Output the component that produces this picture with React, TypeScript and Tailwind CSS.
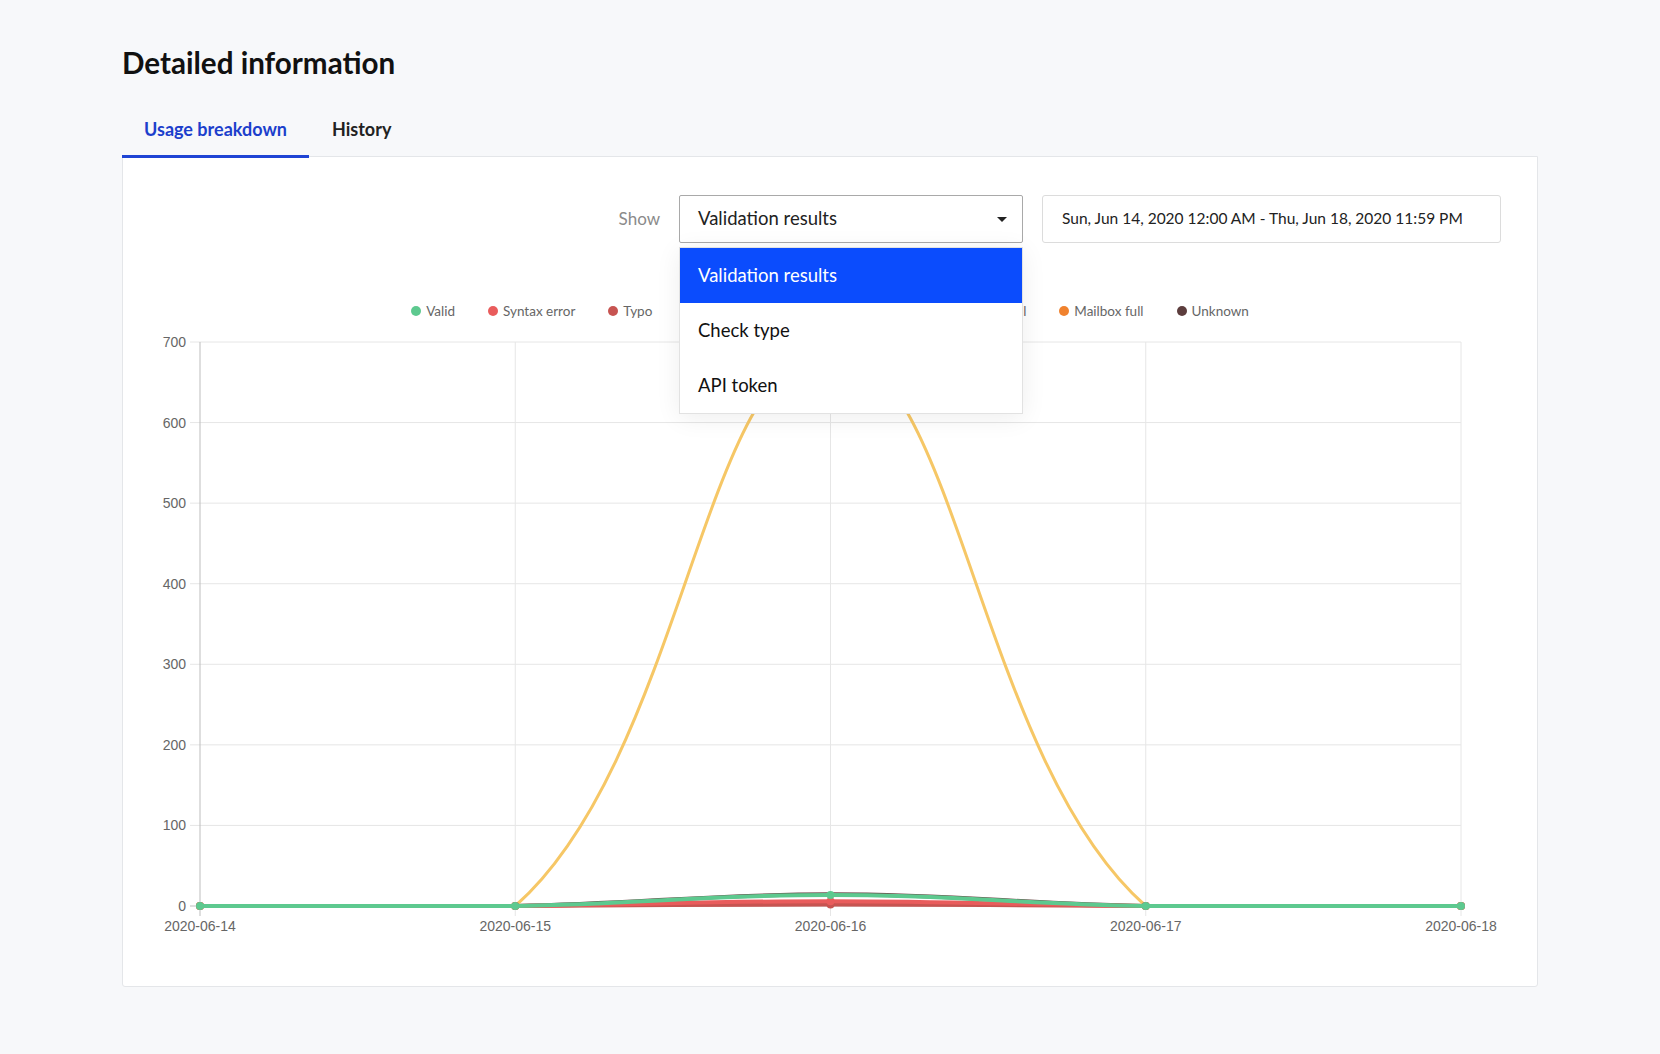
import React from "react";

type Pt = { x: number; y: number };

// chart area, in page pixels
const LEFT = 200;
const RIGHT = 1461;
const TOP = 342;
const BOTTOM = 906;
const STEP = (RIGHT - LEFT) / 4;
const PER = (BOTTOM - TOP) / 700;

const dates = ["2020-06-14", "2020-06-15", "2020-06-16", "2020-06-17", "2020-06-18"];
const ticks = [0, 100, 200, 300, 400, 500, 600, 700];

const legend = [
  { name: "Valid", color: "#5dc98f" },
  { name: "Syntax error", color: "#e95c5c" },
  { name: "Typo", color: "#c75451" },
  { name: "Disposable", color: "#f6c766" },
  { name: "Role", color: "#7c8ce8" },
  { name: "Invalid", color: "#9b59b6" },
  { name: "Catch-all", color: "#4aa8d8" },
  { name: "Mailbox full", color: "#f0822e" },
  { name: "Unknown", color: "#5c3d3d" },
];

// drawn bottom to top, like chart.js does
const series = [
  { color: "#6b4a48", width: 4, data: [0, 0, 14.5, 0, 0], dots: false },
  { color: "#f6c766", width: 3, data: [0, 0, 690, 0, 0], dots: true },
  { color: "#c75451", width: 4, data: [0, 0, 2, 0, 0], dots: true },
  { color: "#e95c5c", width: 4, data: [0, 0, 6, 0, 0], dots: true },
  { color: "#5dc98f", width: 4, data: [0, 0, 13.6, 0, 0], dots: true },
];

function toPoints(data: number[]): Pt[] {
  return data.map((v, i) => ({ x: LEFT + i * STEP, y: BOTTOM - v * PER }));
}

function clamp(q: Pt): Pt {
  return {
    x: Math.min(Math.max(q.x, LEFT), RIGHT),
    y: Math.min(Math.max(q.y, TOP), BOTTOM),
  };
}

// same spline as chart.js (tension 0.4)
function linePath(data: number[]) {
  const pts = toPoints(data);
  const ctrl = pts.map((p, i) => {
    const prev = pts[i - 1] ?? p;
    const next = pts[i + 1] ?? p;
    const d01 = Math.hypot(p.x - prev.x, p.y - prev.y);
    const d12 = Math.hypot(next.x - p.x, next.y - p.y);
    const sum = d01 + d12;
    const fa = sum ? (0.4 * d01) / sum : 0;
    const fb = sum ? (0.4 * d12) / sum : 0;
    return {
      in: clamp({ x: p.x - fa * (next.x - prev.x), y: p.y - fa * (next.y - prev.y) }),
      out: clamp({ x: p.x + fb * (next.x - prev.x), y: p.y + fb * (next.y - prev.y) }),
    };
  });
  let d = `M${pts[0].x},${pts[0].y}`;
  for (let i = 1; i < pts.length; i++) {
    d += ` C${ctrl[i - 1].out.x},${ctrl[i - 1].out.y} ${ctrl[i].in.x},${ctrl[i].in.y} ${pts[i].x},${pts[i].y}`;
  }
  return d;
}

function Chart() {
  return (
    <svg width="1414" height="620" viewBox="123 330 1414 620" className="block">
      {/* horizontal grid */}
      {ticks.map((t) => {
        const y = BOTTOM - t * PER;
        return (
          <g key={t}>
            <line x1={190} x2={RIGHT} y1={y} y2={y} stroke={t === 0 ? "#bdbdbd" : "#e6e6e6"} strokeWidth={1} />
            <text
              x={186}
              y={y + 5}
              textAnchor="end"
              fontSize="14"
              fill="#666"
              fontFamily="'Liberation Sans', Arial, sans-serif"
            >
              {t}
            </text>
          </g>
        );
      })}
      {/* vertical grid */}
      {dates.map((d, i) => {
        const x = LEFT + i * STEP;
        return (
          <g key={d}>
            <line x1={x} x2={x} y1={TOP} y2={BOTTOM + 10} stroke={i === 0 ? "#bdbdbd" : "#e6e6e6"} strokeWidth={1} />
            <text
              x={x}
              y={931}
              textAnchor="middle"
              fontSize="14"
              fill="#666"
              fontFamily="'Liberation Sans', Arial, sans-serif"
            >
              {d}
            </text>
          </g>
        );
      })}
      {series.map((s, i) => (
        <g key={i}>
          <path d={linePath(s.data)} fill="none" stroke={s.color} strokeWidth={s.width} strokeLinejoin="round" />
          {s.dots &&
            toPoints(s.data).map((p, j) => <circle key={j} cx={p.x} cy={p.y} r={4} fill={s.color} />)}
        </g>
      ))}
    </svg>
  );
}

export default function App() {
  return (
    <div className="min-h-screen bg-[#f7f8fa] font-['Lato',sans-serif] text-[#1a1a1a]">
      <div className="pl-[122px] pt-[45px] w-[1538px]">
        <h1 className="text-[29.6px] leading-[36px] font-bold text-[#111]">Detailed information</h1>

        {/* Tabs */}
        <div className="flex mt-[19px] relative z-10">
          <div className="h-[58px] px-[22px] pt-[3px] flex items-center border-b-[3px] border-[#1f44d4] text-[18px] font-bold text-[#1c3fcc]">
            Usage breakdown
          </div>
          <div className="h-[58px] px-[23px] pt-[3px] flex items-center border-b-[3px] border-transparent text-[18px] font-bold text-[#222]">
            History
          </div>
        </div>

        {/* Card */}
        <div className="-mt-[2px] h-[831px] bg-white border border-[#e4e6e9] rounded-b-[3px]">
          <div className="flex items-center justify-end gap-[19px] pt-[38px] pr-[36px]">
            <span className="text-[17px] text-[#8a8a8a]">Show</span>
            <div className="relative">
              <div className="w-[344px] h-[48px] border border-[#a9a9a9] rounded-[2px] flex items-center justify-between pl-[18px] pr-[15px] text-[18.5px] text-[#222]">
                <span>Validation results</span>
                <span className="w-0 h-0 border-l-[5px] border-r-[5px] border-t-[5px] border-l-transparent border-r-transparent border-t-[#222]" />
              </div>
              <div className="absolute top-[52px] left-0 w-[344px] bg-white border border-[#e2e2e2] shadow-[0_4px_24px_rgba(0,0,0,0.07)] z-20">
                <div className="h-[55px] flex items-center px-[18px] bg-[#0b4cfd] text-white text-[18.5px]">
                  Validation results
                </div>
                <div className="h-[55px] flex items-center px-[18px] text-[18.5px] text-[#111]">Check type</div>
                <div className="h-[55px] flex items-center px-[18px] text-[18.5px] text-[#111]">API token</div>
              </div>
            </div>
            <div className="w-[459px] h-[48px] border border-[#dcdcdc] rounded-[3px] flex items-center px-[19px] text-[15.5px] text-[#222]">
              Sun, Jun 14, 2020 12:00 AM - Thu, Jun 18, 2020 11:59 PM
            </div>
          </div>

          {/* Legend */}
          <div className="mt-[60px] h-[16px] flex items-center justify-center gap-[33px] text-[13.5px] text-[#666]">
            {legend.map((l) => (
              <div key={l.name} className="flex items-center gap-[5px]">
                <span className="w-[10px] h-[10px] rounded-full" style={{ background: l.color }} />
                <span>{l.name}</span>
              </div>
            ))}
          </div>

          <div className="mt-[11px]">
            <Chart />
          </div>
        </div>
      </div>
    </div>
  );
}
